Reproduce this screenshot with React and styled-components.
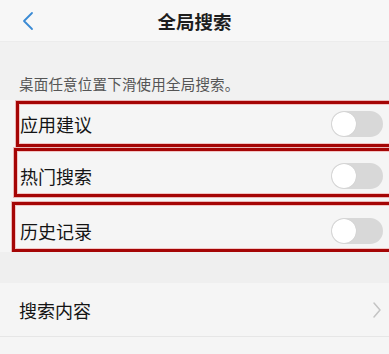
import React from "react";
import styled, { createGlobalStyle } from "styled-components";

const Global = createGlobalStyle`
  html, body { margin: 0; padding: 0; background: #f5f5f5; }
  body { font-family: "Noto Sans CJK SC", "Noto Sans", sans-serif; }
`;

const Page = styled.div`
  width: 389px;
  height: 354px;
  overflow: hidden;
  background: #f5f5f5;
  display: flex;
  flex-direction: column;
`;

const Header = styled.header`
  height: 42px;
  flex: none;
  background: #f7f7f7;
  display: grid;
  grid-template-columns: 60px 1fr 60px;
  align-items: center;
  border-bottom: 1px solid #ececec;
  box-sizing: border-box;
`;

const BackButton = styled.div`
  display: flex;
  align-items: center;
  padding-left: 21px;
  height: 100%;
`;

const Title = styled.h1`
  margin: 0;
  text-align: center;
  font-size: 18.5px;
  font-weight: 700;
  color: #1e1e1e;
  line-height: 1;
  padding-top: 1px;
`;

const Description = styled.div`
  background: #f1f1f1;
  height: 58px;
  flex: none;
  box-sizing: border-box;
  padding: 33px 0 0 19px;
  font-size: 14.5px;
  color: #555;
  line-height: 18px;
  letter-spacing: 0.2px;
`;

const ToggleRow = styled.div`
  flex: none;
  display: flex;
  align-items: center;
  justify-content: space-between;
  box-sizing: border-box;
  height: ${(p) => p.$h}px;
  margin-top: ${(p) => p.$mt}px;
  margin-left: ${(p) => p.$ml}px;
  margin-right: -10px;
  padding: ${(p) => p.$pt}px 13px 0 ${(p) => 20 - p.$ml - 3}px;
  border: 3px solid #a50505;
  box-shadow: inset 0 0 0 1px #f1c4c4, 0 0 0 1px #eab7b7;
  background: #f5f5f5;
`;

const Label = styled.span`
  font-size: 18px;
  color: #141414;
  line-height: 1;
`;

const Switch = styled.div`
  width: 52px;
  height: 26px;
  border-radius: 13px;
  background: #d8d8d8;
  position: relative;
  flex: none;
`;

const Knob = styled.div`
  position: absolute;
  left: 1px;
  top: 1px;
  width: 24px;
  height: 24px;
  border-radius: 50%;
  background: #ffffff;
  box-shadow: 0 0 1px rgba(0, 0, 0, 0.15);
`;

const Gap = styled.div`
  flex: none;
  height: 31px;
  background: #efefef;
`;

const NavRow = styled.div`
  flex: none;
  height: 54px;
  display: flex;
  align-items: center;
  justify-content: space-between;
  padding: 0 7px 0 19px;
  border-bottom: 1px solid #e6e6e6;
  background: #f5f5f5;
  box-sizing: border-box;
`;

const Toggle = () => (
  <Switch>
    <Knob />
  </Switch>
);

export default function App() {
  return (
    <Page>
      <Global />
      <Header>
        <BackButton>
          <svg width="14" height="20" viewBox="0 0 14 20" fill="none">
            <path d="M11 2 L3 10 L11 18" stroke="#3a8ad4" strokeWidth="1.8" strokeLinecap="round" strokeLinejoin="round" />
          </svg>
        </BackButton>
        <Title>全局搜索</Title>
        <div />
      </Header>
      <Description>桌面任意位置下滑使用全局搜索。</Description>
      <ToggleRow $h={46} $mt={1} $ml={16} $pt={0}>
        <Label>应用建议</Label>
        <Toggle />
      </ToggleRow>
      <ToggleRow $h={49} $mt={1} $ml={14} $pt={7}>
        <Label>热门搜索</Label>
        <Toggle />
      </ToggleRow>
      <ToggleRow $h={50} $mt={5} $ml={12} $pt={8}>
        <Label>历史记录</Label>
        <Toggle />
      </ToggleRow>
      <Gap />
      <NavRow>
        <Label>搜索内容</Label>
        <svg width="10" height="18" viewBox="0 0 10 18" fill="none">
          <path d="M2 2 L8 9 L2 16" stroke="#c4c4c4" strokeWidth="1.5" strokeLinecap="round" strokeLinejoin="round" />
        </svg>
      </NavRow>
    </Page>
  );
}
